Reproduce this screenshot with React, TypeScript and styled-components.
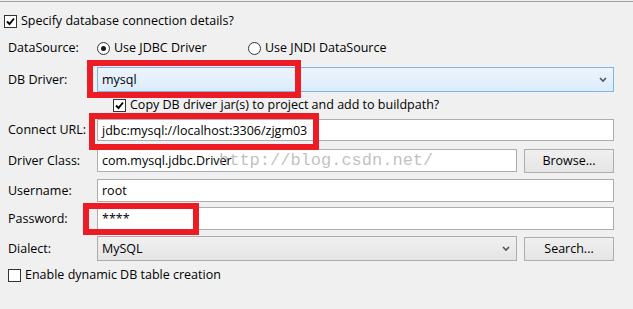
import React from "react";
import styled, { createGlobalStyle } from "styled-components";

const Global = createGlobalStyle`
  html, body { margin: 0; padding: 0; background: #f0f0f0; }
  body { font-family: "Open Sans", "Noto Sans", sans-serif; font-size: 12.5px; color: #000; }
`;

const Page = styled.div`
  position: relative;
  width: 633px;
  height: 309px;
  overflow: hidden;
  background: #f0f0f0;
  border-top: 1px solid #f0f0f0;
  box-sizing: border-box;
`;

const TopRule = styled.div`
  height: 1px;
  background: #a0a0a0;
`;

const Form = styled.div`
  display: flex;
  flex-direction: column;
  padding-left: 8px;
  width: 606px;
`;

const Row = styled.div<{ $top: number; $h: number; $indent?: number }>`
  display: flex;
  align-items: center;
  margin-top: ${(p) => p.$top}px;
  height: ${(p) => p.$h}px;
  margin-left: ${(p) => p.$indent ?? 0}px;
`;

const Label = styled.div`
  width: 89px;
  flex: none;
  white-space: nowrap;
  line-height: 14px;
`;

const Text = styled.span`
  white-space: nowrap;
  line-height: 14px;
`;

const Box = styled.span`
  width: 11px;
  height: 11px;
  border: 1px solid #333;
  background: #fff;
  flex: none;
  display: inline-flex;
  align-items: center;
  justify-content: center;
  margin-right: 4px;
`;

const RadioCircle = styled.span<{ $on?: boolean }>`
  width: 11px;
  height: 11px;
  border: 1px solid #333;
  border-radius: 50%;
  background: #fff;
  flex: none;
  display: inline-flex;
  align-items: center;
  justify-content: center;
  margin-right: 4px;
  &::after {
    content: "";
    width: 5px;
    height: 5px;
    border-radius: 50%;
    background: ${(p) => (p.$on ? "#1a1a1a" : "transparent")};
  }
`;

const Radio = styled.span<{ $w: number }>`
  display: inline-flex;
  align-items: center;
  width: ${(p) => p.$w}px;
`;

const Input = styled.div<{ $w?: number }>`
  box-sizing: border-box;
  height: 100%;
  width: ${(p) => (p.$w ? `${p.$w}px` : "auto")};
  flex: ${(p) => (p.$w ? "none" : "1")};
  background: #fff;
  border: 1px solid #abadb3;
  display: flex;
  align-items: center;
  padding-left: 4px;
  white-space: nowrap;
`;

const Combo = styled.div<{ $focus?: boolean; $w?: number }>`
  box-sizing: border-box;
  height: 100%;
  width: ${(p) => (p.$w ? `${p.$w}px` : "auto")};
  flex: ${(p) => (p.$w ? "none" : "1")};
  border: 1px solid ${(p) => (p.$focus ? "#7eb4ea" : "#acacac")};
  background: ${(p) =>
    p.$focus
      ? "linear-gradient(#ecf4fc, #dcecfc)"
      : "linear-gradient(#f0f0f0, #e5e5e5)"};
  display: flex;
  align-items: center;
  justify-content: space-between;
  padding: 0 6px 0 4px;
`;

const Button = styled.div`
  box-sizing: border-box;
  margin-left: 7px;
  width: 90px;
  height: 24px;
  border: 1px solid #adadad;
  background: linear-gradient(#f0f0f0, #e5e5e5);
  display: flex;
  align-items: center;
  justify-content: center;
  flex: none;
`;

const Annot = styled.div`
  position: absolute;
  border: 6px solid #ed1c24;
  box-sizing: border-box;
  pointer-events: none;
`;

const Watermark = styled.div`
  position: absolute;
  left: 219px;
  top: 150px;
  font-family: "Liberation Mono", monospace;
  font-size: 17px;
  color: rgba(150, 150, 150, 0.6);
  white-space: nowrap;
  pointer-events: none;
`;

const Check = () => (
  <svg width="9" height="9" viewBox="0 0 9 9">
    <path d="M1 4.5 L3.5 7 L8 1.5" fill="none" stroke="#000" strokeWidth="1.9" />
  </svg>
);

const Chevron = () => (
  <svg width="8" height="6" viewBox="0 0 8 6">
    <path d="M1 1 L4 4 L7 1" fill="none" stroke="#555" strokeWidth="1.6" />
  </svg>
);

export default function App() {
  return (
    <Page>
      <Global />
      <TopRule />
      <Form>
        <Row $top={12} $h={14} $indent={-4}>
          <Box><Check /></Box>
          <Text>Specify database connection details?</Text>
        </Row>
        <Row $top={13} $h={14}>
          <Label>DataSource:</Label>
          <Radio $w={151}>
            <RadioCircle $on />
            <Text>Use JDBC Driver</Text>
          </Radio>
          <Radio $w={150}>
            <RadioCircle />
            <Text>Use JNDI DataSource</Text>
          </Radio>
        </Row>
        <Row $top={12} $h={25}>
          <Label>DB Driver:</Label>
          <Combo $focus>
            <span>mysql</span>
            <Chevron />
          </Combo>
        </Row>
        <Row $top={6} $h={14} $indent={105}>
          <Box><Check /></Box>
          <Text>Copy DB driver jar(s) to project and add to buildpath?</Text>
        </Row>
        <Row $top={7} $h={22}>
          <Label>Connect URL:</Label>
          <Input>jdbc:mysql://localhost:3306/zjgm03</Input>
        </Row>
        <Row $top={8} $h={23}>
          <Label>Driver Class:</Label>
          <Input>com.mysql.jdbc.Driver</Input>
          <Button>Browse...</Button>
        </Row>
        <Row $top={7} $h={23}>
          <Label>Username:</Label>
          <Input>root</Input>
        </Row>
        <Row $top={5} $h={23}>
          <Label>Password:</Label>
          <Input>****</Input>
        </Row>
        <Row $top={6} $h={25}>
          <Label>Dialect:</Label>
          <Combo>
            <span>MySQL</span>
            <Chevron />
          </Combo>
          <Button>Search...</Button>
        </Row>
        <Row $top={7} $h={14}>
          <Box />
          <Text>Enable dynamic DB table creation</Text>
        </Row>
      </Form>
      <Watermark>http://blog.csdn.net/</Watermark>
      <Annot style={{ left: 87, top: 59, width: 214, height: 38 }} />
      <Annot style={{ left: 89, top: 112, width: 230, height: 37 }} />
      <Annot style={{ left: 83, top: 202, width: 116, height: 32 }} />
    </Page>
  );
}
